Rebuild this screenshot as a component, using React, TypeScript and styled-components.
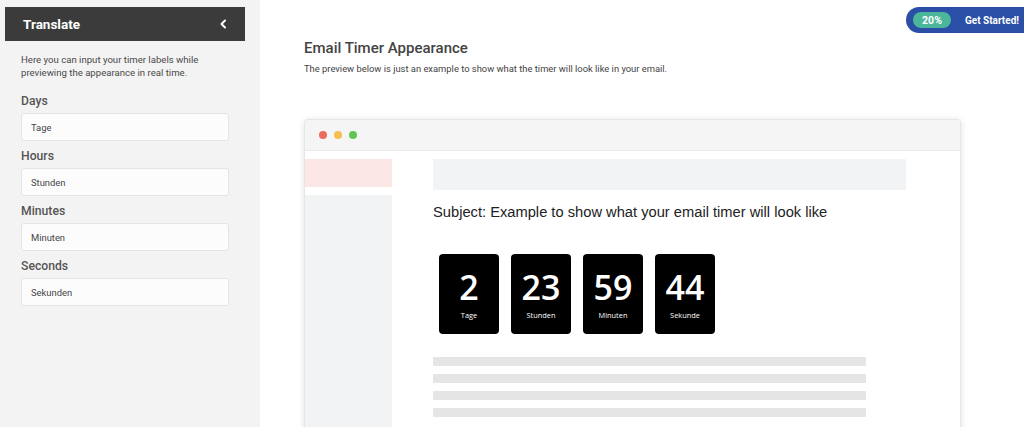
import React from "react";
import styled, { createGlobalStyle } from "styled-components";

const GlobalStyle = createGlobalStyle`
    html, body {
        margin  : 0;
        padding : 0;
        overflow: hidden;
        background: #fff;
        font-family: Roboto, "Liberation Sans", Arial, sans-serif;
    }
`;

const labels = [
    { title: "Days", value: "Tage" },
    { title: "Hours", value: "Stunden" },
    { title: "Minutes", value: "Minuten" },
    { title: "Seconds", value: "Sekunden" },
];

const timer = [
    { value: "2", label: "Tage" },
    { value: "23", label: "Stunden" },
    { value: "59", label: "Minuten" },
    { value: "44", label: "Sekunde" },
];

export default () => (
    <Page>
        <GlobalStyle />
        <Sidebar>
            <SidebarHeader>
                <span>Translate</span>
                <svg width="10" height="12" viewBox="0 0 10 12">
                    <path d="M7 2.5 L3.5 6 L7 9.5" fill="none" stroke="#fff" strokeWidth="2" strokeLinecap="round" strokeLinejoin="round" />
                </svg>
            </SidebarHeader>
            <SidebarBody>
                <Intro>Here you can input your timer labels while previewing the appearance in real time.</Intro>
                {labels.map(item => (
                    <Field key={item.title}>
                        <FieldLabel>{item.title}</FieldLabel>
                        <TextInput defaultValue={item.value} />
                    </Field>
                ))}
            </SidebarBody>
        </Sidebar>
        <Main>
            <StartBadge>
                <Progress>20%</Progress>
                <span>Get Started!</span>
            </StartBadge>
            <Title>Email Timer Appearance</Title>
            <Subtitle>The preview below is just an example to show what the timer will look like in your email.</Subtitle>
            <Browser>
                <BrowserBar>
                    <Dot color="#ec6a5e" />
                    <Dot color="#f4bf4f" />
                    <Dot color="#61c554" />
                </BrowserBar>
                <BrowserBody>
                    <MailList>
                        <MailItem active />
                        <MailItem />
                    </MailList>
                    <MailContent>
                        <Placeholder />
                        <Subject>Subject: Example to show what your email timer will look like</Subject>
                        <TimerRow>
                            {timer.map(t => (
                                <TimerBox key={t.label}>
                                    <TimerValue>{t.value}</TimerValue>
                                    <TimerLabel>{t.label}</TimerLabel>
                                </TimerBox>
                            ))}
                        </TimerRow>
                        <Lines>
                            <Line />
                            <Line />
                            <Line />
                            <Line />
                        </Lines>
                    </MailContent>
                </BrowserBody>
            </Browser>
        </Main>
    </Page>
);

const Page = styled.div`
    display: flex;
    height : 427px;
    overflow: hidden;
`;

const Sidebar = styled.aside`
    width     : 260px;
    flex-shrink: 0;
    box-sizing: border-box;
    padding   : 7px 15px 0 5px;
    background: #f3f3f3;
`;

const SidebarHeader = styled.div`
    display        : flex;
    align-items    : center;
    justify-content: space-between;
    height         : 34px;
    padding        : 0 17px 0 18px;
    background     : #3b3b3b;
    color          : #fff;
    font-size      : 13.5px;
    font-weight    : 700;
`;

const SidebarBody = styled.div`
    padding: 13px 0 0 16px;
`;

const Intro = styled.p`
    margin     : 0 0 14px;
    font-size  : 9.6px;
    line-height: 12.5px;
    color      : #4a4a4a;
    width      : 200px;
`;

const Field = styled.div`
    display       : flex;
    flex-direction: column;
    gap           : 4px;
    margin-bottom : 7px;
`;

const FieldLabel = styled.label`
    font-size  : 12.2px;
    line-height: 16px;
    font-weight: 500;
    color      : #555;
`;

const TextInput = styled.input`
    box-sizing   : border-box;
    width        : 208px;
    height       : 28px;
    padding      : 0 9px;
    border       : 1px solid #e4e4e4;
    border-radius: 3px;
    background   : #fcfcfc;
    font-family  : inherit;
    font-size    : 9.4px;
    color        : #444;
    outline      : none;
`;

const Main = styled.main`
    position  : relative;
    flex-grow : 1;
    padding   : 39px 0 0 44px;
    background: #fff;
`;

const StartBadge = styled.div`
    position     : absolute;
    top          : 7px;
    right        : -15px;
    display      : flex;
    align-items  : center;
    gap          : 14px;
    height       : 26px;
    padding      : 0 20px 0 7px;
    border-radius: 13px;
    background   : #2b4ea6;
    color        : #fff;
    font-size    : 10px;
    font-weight  : 700;
`;

const Progress = styled.span`
    display        : flex;
    align-items    : center;
    justify-content: center;
    width          : 38px;
    height         : 16px;
    border-radius  : 8px;
    background     : #4cb69a;
    font-size      : 10.5px;
`;

const Title = styled.h1`
    margin     : 0;
    font-size  : 15px;
    line-height: 19px;
    font-weight: 500;
    color      : #444;
`;

const Subtitle = styled.p`
    margin     : 5px 0 0;
    font-size  : 9.4px;
    line-height: 12px;
    color      : #444;
`;

const Browser = styled.div`
    width        : 655px;
    height       : 330px;
    margin-top   : 44px;
    border       : 1px solid #e6e6e6;
    border-radius: 4px;
    box-shadow   : 0 1px 6px rgba(0, 0, 0, 0.12);
    background   : #fff;
    overflow     : hidden;
`;

const BrowserBar = styled.div`
    display      : flex;
    align-items  : center;
    gap          : 7px;
    height       : 30px;
    padding-left : 14px;
    background   : #f5f5f5;
    border-bottom: 1px solid #ececec;
`;

const Dot = styled.span<{ color: string }>`
    width        : 8px;
    height       : 8px;
    border-radius: 50%;
    background   : ${props => props.color};
`;

const BrowserBody = styled.div`
    display: flex;
    height : 100%;
`;

const MailList = styled.div`
    display       : flex;
    flex-direction: column;
    gap           : 8px;
    width         : 87px;
    padding-top   : 8px;
`;

const MailItem = styled.div<{ active?: boolean }>`
    height    : ${props => (props.active ? "28px" : "auto")};
    flex-grow : ${props => (props.active ? 0 : 1)};
    background: ${props => (props.active ? "#fbe8e6" : "#f2f3f5")};
`;

const MailContent = styled.div`
    flex-grow  : 1;
    padding    : 8px 0 0 41px;
`;

const Placeholder = styled.div`
    width     : 473px;
    height    : 31px;
    background: #f2f3f5;
`;

const Subject = styled.div`
    margin-top : 13px;
    font-size  : 14.7px;
    line-height: 19px;
    color      : #222;
    font-family: "Liberation Sans", Arial, sans-serif;
`;

const TimerRow = styled.div`
    display    : flex;
    gap        : 12px;
    margin     : 32px 0 0 6px;
`;

const TimerBox = styled.div`
    display        : flex;
    flex-direction : column;
    align-items    : center;
    width          : 60px;
    height         : 80px;
    border-radius  : 4px;
    background     : #000;
    color          : #fff;
    font-family    : "Open Sans", sans-serif;
`;

const TimerValue = styled.div`
    margin-top : 14px;
    font-size  : 34px;
    line-height: 38px;
    font-weight: 600;
`;

const TimerLabel = styled.div`
    margin-top : 5px;
    font-size  : 7.4px;
    line-height: 9px;
`;

const Lines = styled.div`
    display       : flex;
    flex-direction: column;
    gap           : 8px;
    margin-top    : 23px;
`;

const Line = styled.div`
    width        : 433px;
    height       : 9px;
    border-radius: 1px;
    background   : #e5e5e5;
`;
